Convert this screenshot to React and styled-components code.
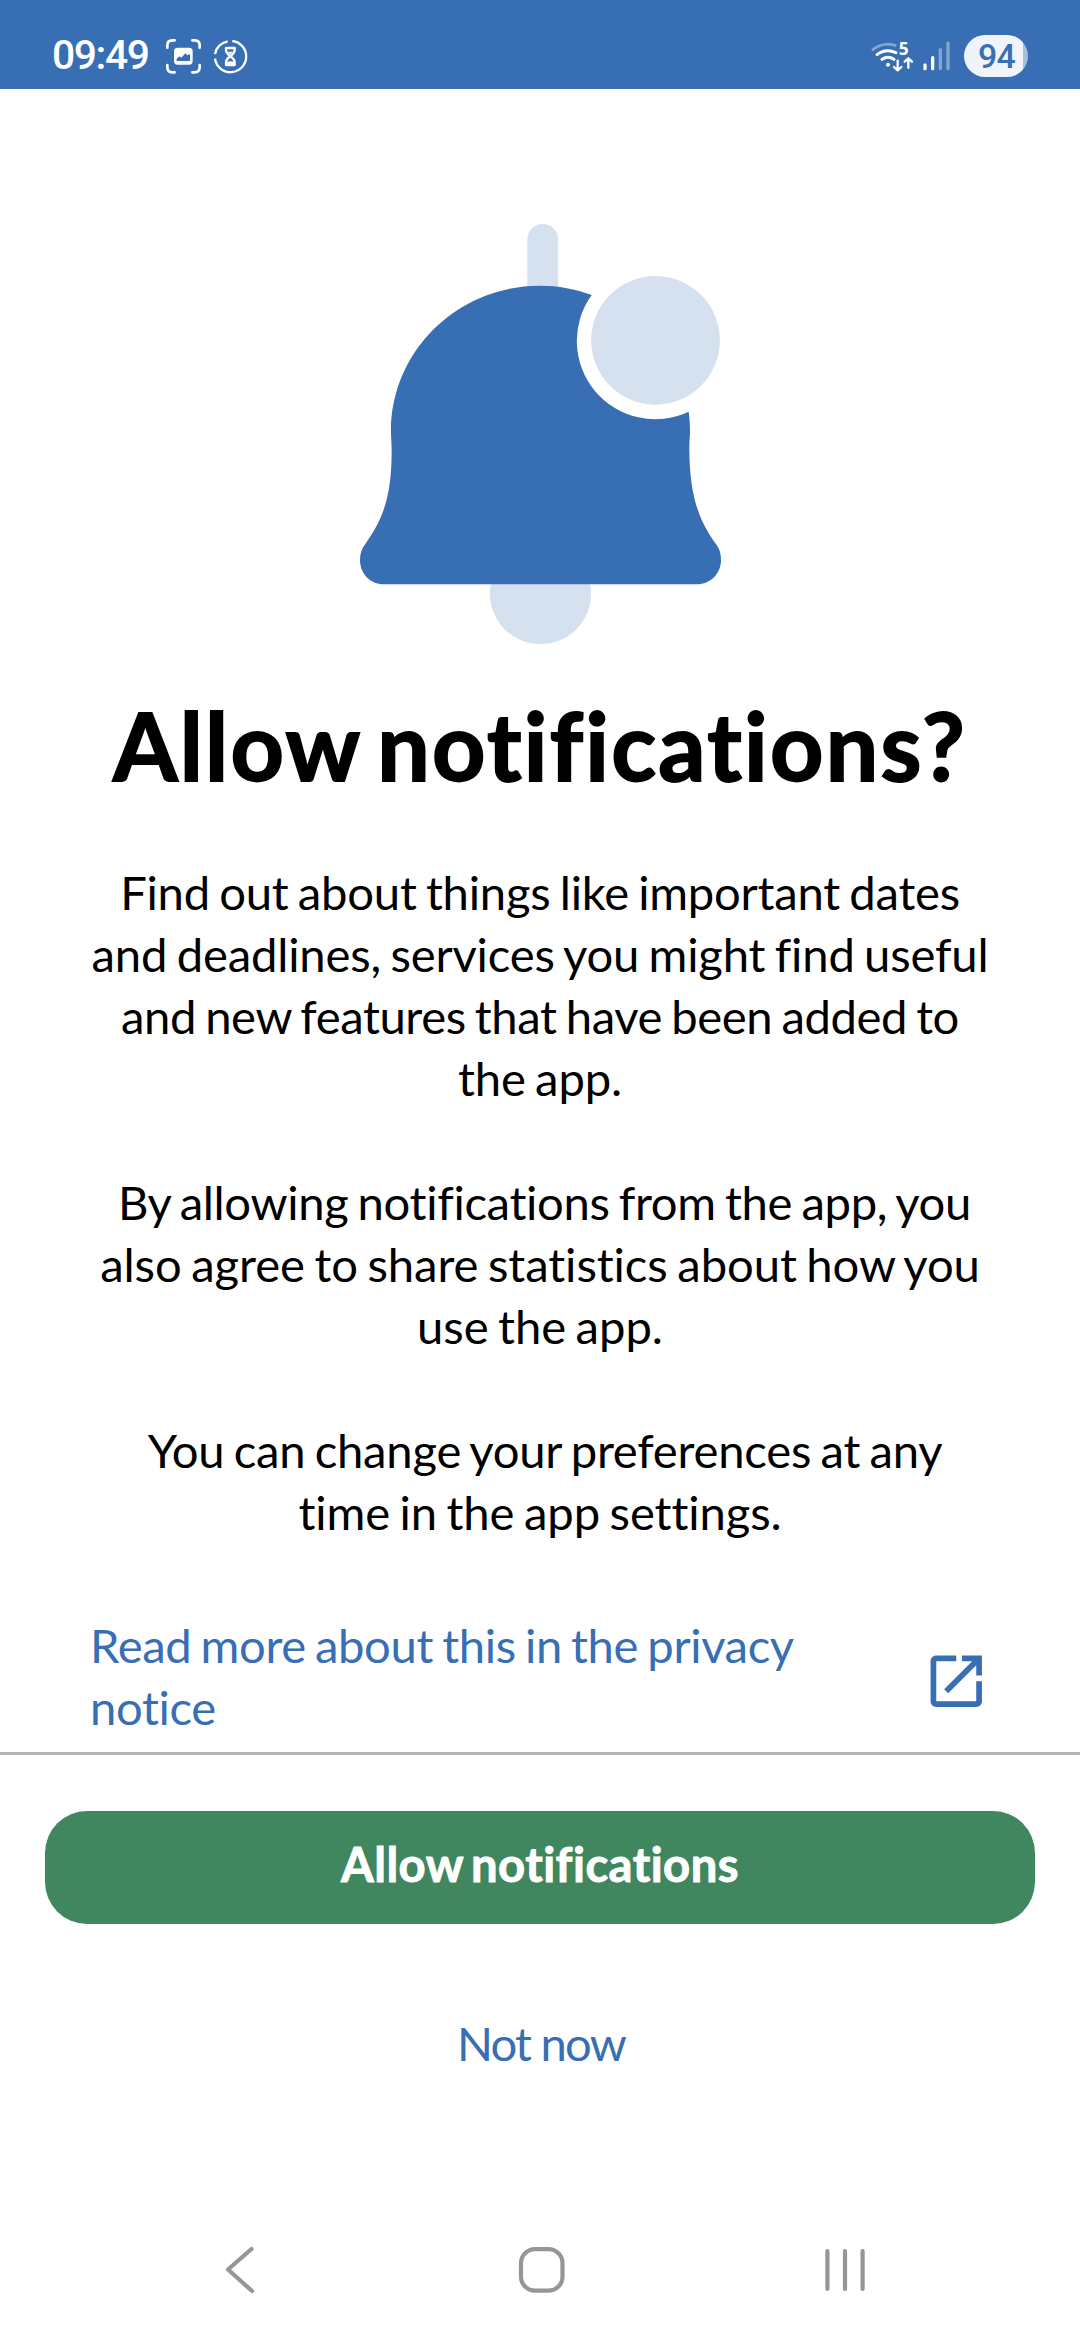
import React from "react";
import styled, { createGlobalStyle } from "styled-components";

const blue = "#386eb3";
const pale = "#d5e1ee";

const GlobalStyle = createGlobalStyle`
  body { margin: 0; background: #fff; }
  * { box-sizing: border-box; }
`;

const Screen = styled.div`
  width: 1080px;
  height: 2340px;
  display: flex;
  flex-direction: column;
  background: #fff;
  overflow: hidden;
  font-family: Lato, "Open Sans", sans-serif;
  font-variant-ligatures: none;
  color: #000;
`;

const StatusBar = styled.header`
  height: 89px;
  flex: none;
  display: flex;
  justify-content: space-between;
  padding: 31px 52px 0 52px;
  background: ${blue};
  color: #fff;
  font-family: Roboto, sans-serif;
  font-weight: 500;
`;

const StatusGroup = styled.div`
  display: flex;
  align-items: flex-start;
`;

const Clock = styled.span`
  width: 112px;
  font-size: 40.8px;
  line-height: 48px;
  letter-spacing: -1.4px;
`;

const StatusIcon = styled.svg`
  display: block;
  flex: none;
  margin-top: -1px;
`;

const Battery = styled.span`
  width: 64px;
  height: 42px;
  margin-top: 4px;
  border-radius: 21px;
  background: linear-gradient(90deg, #f0f4fa 59px, #a6bedd 59px);
  color: ${blue};
  font-size: 33.8px;
  line-height: 43px;
  letter-spacing: -0.7px;
  padding-left: 14px;
`;

const Content = styled.main`
  height: 1663px;
  flex: none;
  display: flex;
  flex-direction: column;
  align-items: center;
  padding-top: 111px;
`;

const Bell = styled.svg`
  display: block;
  width: 400px;
  height: 460px;
`;

const Title = styled.h1`
  margin: 29px 0 60px;
  font-size: 93.1px;
  line-height: 112px;
  font-weight: 700;
  letter-spacing: 2.25px;
  word-spacing: -8px;
  -webkit-text-stroke: 1.8px currentColor;
  white-space: nowrap;
`;

const Paragraph = styled.p`
  margin: 0 0 ${(p) => p.$gap ?? 62}px;
  text-align: center;
`;

const Line = styled.span`
  display: block;
  font-size: 47.2px;
  line-height: 62px;
  white-space: nowrap;
  letter-spacing: ${(p) => p.$track}px;
  word-spacing: ${(p) => p.$word ?? -2.5}px;
  padding-left: ${(p) => p.$indent ?? 0}px;
`;

const LinkRow = styled.a`
  width: 100%;
  display: flex;
  justify-content: space-between;
  align-items: center;
  padding: 0 90px;
  color: ${blue};
`;

const OpenIcon = styled.svg`
  display: block;
  width: 68.5px;
  height: 68.5px;
  margin-top: 10px;
`;

const Footer = styled.section`
  flex: none;
  height: 448px;
  border-top: 3px solid #b3b3b3;
  padding: 56px 45px 0;
  display: flex;
  flex-direction: column;
  gap: 87px;
`;

const Button = styled.button`
  border: 0;
  margin: 0;
  width: 100%;
  display: flex;
  justify-content: center;
  font-family: inherit;
  font-variant-ligatures: none;
  font-weight: ${(p) => (p.$primary ? 700 : 400)};
  -webkit-text-stroke: ${(p) => (p.$primary ? 0.9 : 0)}px currentColor;
  background: ${(p) => (p.$primary ? "#40865e" : "transparent")};
  color: ${(p) => (p.$primary ? "#fff" : blue)};
  height: ${(p) => (p.$primary ? 113 : 62)}px;
  border-radius: 42px;
  padding: ${(p) => (p.$primary ? 22 : 1)}px 0 0;
`;

const NavBar = styled.nav`
  height: 140px;
  flex: none;
  display: flex;
  align-items: center;
  justify-content: space-between;
  padding: 0 205px;
`;

const NavIcon = styled.svg`
  display: block;
  width: 70px;
  height: 60px;
  fill: none;
  stroke: #969696;
  stroke-width: 4.2;
  stroke-linecap: round;
  stroke-linejoin: round;
`;

const paragraphs = [
  {
    lines: [
      ["Find out about things like important dates", -0.23],
      ["and deadlines, services you might find useful", -0.17],
      ["and new features that have been added to", -0.4],
      ["the app.", -0.17],
    ],
  },
  {
    lines: [
      ["By allowing notifications from the app, you", -0.33, 9],
      ["also agree to share statistics about how you", -0.06],
      ["use the app.", -0.05],
    ],
  },
  {
    gap: 71,
    lines: [
      ["You can change your preferences at any", -0.22, 10],
      ["time in the app settings.", -0.08],
    ],
  },
];

export default function App() {
  return (
    <>
      <GlobalStyle />
      <Screen>
        <StatusBar>
          <StatusGroup>
            <Clock>09:49</Clock>
            <StatusIcon width="92" height="50" viewBox="12 0 276 150" fill="none" stroke="#fff" strokeLinecap="round">
              <path
                d="M22 53V46Q22 31 37 31H44M97 31H104Q119 31 119 46V53M119 105V112Q119 127 104 127H97M44 127H37Q22 127 22 112V105"
                strokeWidth="8"
              />
              <rect x="42" y="53" width="56" height="51" rx="11" fill="#fff" stroke="none" />
              <path d="M50 93V86L58 79L64 83L76 70L82 76L90 72V93Z" fill={blue} stroke="none" />
              <path
                d="M165 72A47 47 0 0 1 203 34M217 33A47 47 0 1 1 165 86"
                strokeWidth="7"
                strokeLinecap="butt"
              />
              <path
                d="M198 54H224V61Q224 69 211 79Q198 69 198 61ZM211 79Q224 88 224 98V105H198V98Q198 88 211 79Z"
                strokeWidth="7"
                strokeLinejoin="round"
              />
              <path d="M200 97Q211 90 222 97V104H200ZM203 65H219L211 74Z" fill="#fff" stroke="none" />
            </StatusIcon>
          </StatusGroup>
          <StatusGroup>
            <StatusIcon width="99" height="50" viewBox="0 0 297 150" fill="none" stroke="#fff" strokeLinecap="round">
              <path d="M21 61Q53 34 94 47" strokeWidth="8" opacity=".4" strokeLinecap="butt" />
              <path d="M36 74Q61 54 93 68" strokeWidth="9" />
              <path d="M51 88Q69 75 87 88" strokeWidth="9" />
              <circle cx="69" cy="104" r="6" fill="#fff" stroke="none" />
              <path d="M98 92V120M87 111L98 121L109 111M130 113V86M119 95L130 85L141 95" strokeWidth="7" strokeLinejoin="round" />
              <path d="M180 105V116M203 83V116" strokeWidth="10" />
              <path d="M226 59V116M249 39V116" strokeWidth="10" opacity=".38" />
              <text x="101" y="75" fontFamily="Open Sans, sans-serif" fontWeight="700" fontSize="52" fill="#fff" stroke="none">
                5
              </text>
            </StatusIcon>
            <Battery>94</Battery>
          </StatusGroup>
        </StatusBar>

        <Content>
          <Bell viewBox="0 0 1200 1380">
            <rect x="562" y="72" width="92.5" height="260" rx="46.2" fill={pale} />
            <circle cx="601.5" cy="1181" r="151.5" fill={pale} />
            <path
              fill={blue}
              d="M132 1153C90 1153 60 1120 60 1080C60 1062 65 1046 76 1032C130 955 155 890 155 750C155 725 153 710 153 695C153 450 355 257 601 257C655 257 706 267 755 285A235 235 0 0 0 1046 635C1049 655 1050 675 1050 700C1049 715 1048 730 1048 750C1049 890 1078 965 1130 1035C1139 1047 1143 1062 1143 1080C1143 1120 1112 1153 1070 1153Z"
            />
            <circle cx="946.5" cy="421" r="193" fill={pale} />
          </Bell>
          <Title>Allow notifications?</Title>
          {paragraphs.map((p) => (
            <Paragraph key={p.lines[0][0]} $gap={p.gap}>
              {p.lines.map(([text, track, indent]) => (
                <Line key={text} $track={track} $indent={indent}>
                  {text}
                </Line>
              ))}
            </Paragraph>
          ))}
          <LinkRow>
            <span>
              <Line $track={-0.37}>Read more about this in the privacy</Line>
              <Line $track={-0.36}>notice</Line>
            </span>
            <OpenIcon viewBox="0 0 24 24" fill={blue}>
              <path d="M19 19H5V5h7V3H5c-1.11 0-2 .9-2 2v14c0 1.1.89 2 2 2h14c1.1 0 2-.9 2-2v-7h-2v7zM14 3v2h3.59l-9.83 9.83 1.41 1.41L19 6.41V10h2V3h-7z" />
            </OpenIcon>
          </LinkRow>
        </Content>

        <Footer>
          <Button $primary>
            <Line $track={0.45} $word={-4}>Allow notifications</Line>
          </Button>
          <Button>
            <Line $track={-1.8} $word={0} $indent={2}>Not now</Line>
          </Button>
        </Footer>

        <NavBar>
          <NavIcon viewBox="0 0 70 60">
            <path d="M46.5 9L23 29.5L47 51" />
          </NavIcon>
          <NavIcon viewBox="0 0 70 60">
            <rect x="16" y="9.2" width="41.5" height="41.5" rx="14" />
          </NavIcon>
          <NavIcon viewBox="0 0 70 60">
            <path d="M22.4 11V49M40 11V49M57.6 11V49" />
          </NavIcon>
        </NavBar>
      </Screen>
    </>
  );
}
